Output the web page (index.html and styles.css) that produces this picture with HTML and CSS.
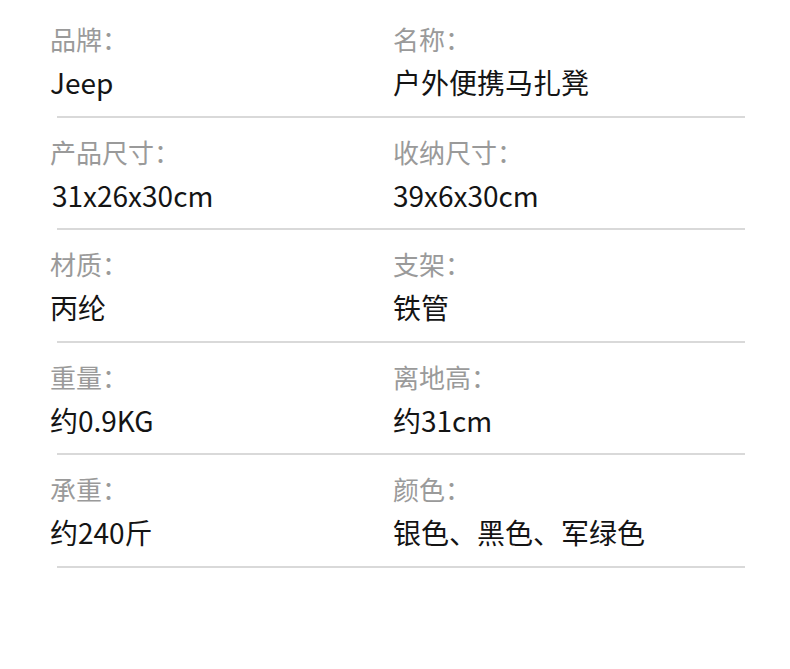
FILE: index.html
```html
<!DOCTYPE html>
<html lang="zh-CN">
<head>
    <meta charset="UTF-8">
    <meta name="viewport" content="width=device-width, initial-scale=1.0">
    <title>产品参数</title>
    <link rel="stylesheet" href="styles.css">
</head>
<body>
    <div class="specs">
        <div class="row">
            <div class="cell">
                <div class="label">品牌：</div>
                <div class="value">Jeep</div>
            </div>
            <div class="cell">
                <div class="label">名称：</div>
                <div class="value">户外便携马扎凳</div>
            </div>
        </div>
        <div class="row">
            <div class="cell">
                <div class="label">产品尺寸：</div>
                <div class="value num">31x26x30cm</div>
            </div>
            <div class="cell">
                <div class="label">收纳尺寸：</div>
                <div class="value">39x6x30cm</div>
            </div>
        </div>
        <div class="row">
            <div class="cell">
                <div class="label">材质：</div>
                <div class="value">丙纶</div>
            </div>
            <div class="cell">
                <div class="label">支架：</div>
                <div class="value">铁管</div>
            </div>
        </div>
        <div class="row">
            <div class="cell">
                <div class="label">重量：</div>
                <div class="value">约0.9KG</div>
            </div>
            <div class="cell">
                <div class="label">离地高：</div>
                <div class="value">约31cm</div>
            </div>
        </div>
        <div class="row">
            <div class="cell">
                <div class="label">承重：</div>
                <div class="value">约240斤</div>
            </div>
            <div class="cell">
                <div class="label">颜色：</div>
                <div class="value">银色、黑色、军绿色</div>
            </div>
        </div>
    </div>
</body>
</html>
```

FILE: styles.css
```css
*{
    box-sizing: border-box;
    font-family: "Noto Sans CJK SC", "Noto Sans", sans-serif;
}
body{
    margin: 0;
    background-color: #ffffff;
}
.specs{
    padding-top: 5px;
    padding-left: 51px;
    width: 745px;
}
.row{
    display: grid;
    grid-template-columns: 343px 1fr;
    padding-top: 16px;
    padding-bottom: 13.5px;
    border-bottom: 2px solid #d9d9d9;
    margin-left: 6px;
}
.cell{
    display: flex;
    flex-direction: column;
    gap: 5px;
    margin-left: -7px;
}
.label{
    color: #9a9a9a;
    font-size: 26px;
    line-height: 36px;
}
.value{
    color: #141414;
    font-size: 28px;
    line-height: 40px;
}
.num{
    padding-left: 2px;
}
```
